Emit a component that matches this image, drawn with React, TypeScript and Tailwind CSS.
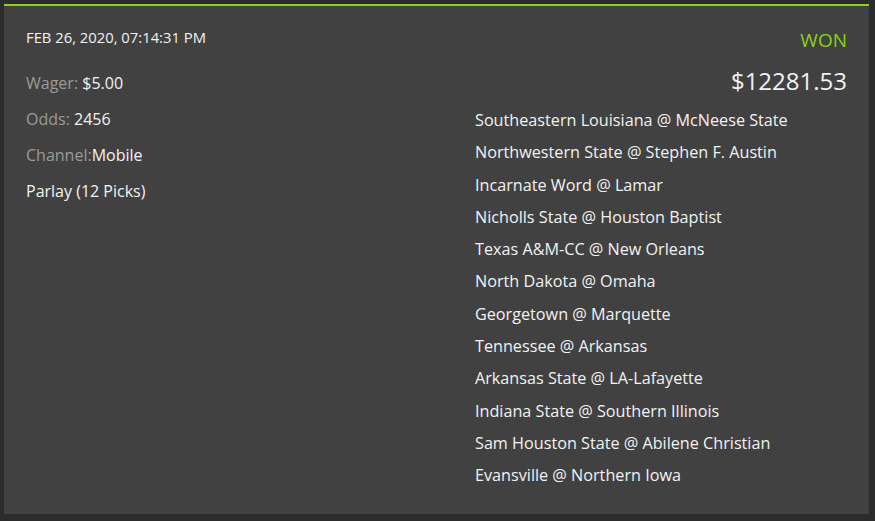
const picks = [
  'Southeastern Louisiana @ McNeese State',
  'Northwestern State @ Stephen F. Austin',
  'Incarnate Word @ Lamar',
  'Nicholls State @ Houston Baptist',
  'Texas A&M-CC @ New Orleans',
  'North Dakota @ Omaha',
  'Georgetown @ Marquette',
  'Tennessee @ Arkansas',
  'Arkansas State @ LA-Lafayette',
  'Indiana State @ Southern Illinois',
  'Sam Houston State @ Abilene Christian',
  'Evansville @ Northern Iowa',
]

export default function App() {
  return (
    <div
      className="w-[875px] h-[521px] bg-[#2c2c2c] pt-1 pl-1"
      style={{ fontFamily: '"Open Sans", sans-serif' }}
    >
      <div className="w-[865px] h-[510px] bg-[#414141] border-t-2 border-[#8bd21a] px-[22px] flex text-[#f2f2f2]">
        {/* bet summary */}
        <div className="w-[449px] pt-[21px]">
          <div className="h-5 leading-5 text-[14.8px] uppercase">Feb 26, 2020, 07:14:31 PM</div>
          <div className="mt-[18px]">
            <div className="h-9 flex items-center text-[16px]">
              <span className="text-[#9b9b9b]">Wager:&nbsp;</span>$5.00
            </div>
            <div className="h-9 flex items-center text-[16px]">
              <span className="text-[#9b9b9b]">Odds:&nbsp;</span>2456
            </div>
            <div className="h-9 flex items-center text-[16px]">
              <span className="text-[#9b9b9b]">Channel:</span>Mobile
            </div>
            <div className="h-9 flex items-center text-[16px]">Parlay (12 Picks)</div>
          </div>
        </div>

        {/* result + picks */}
        <div className="flex-1 pt-[22px]">
          <div className="h-6 leading-6 text-right text-[19px] text-[#8bd21a]">WON</div>
          <div className="mt-[13px] h-8 leading-8 text-right text-[24px]">$12281.53</div>
          <div className="mt-[7px]">
            {picks.map((p) => (
              <div key={p} className="h-[32.3px] flex items-center text-[16.2px]">
                {p}
              </div>
            ))}
          </div>
        </div>
      </div>
    </div>
  )
}
